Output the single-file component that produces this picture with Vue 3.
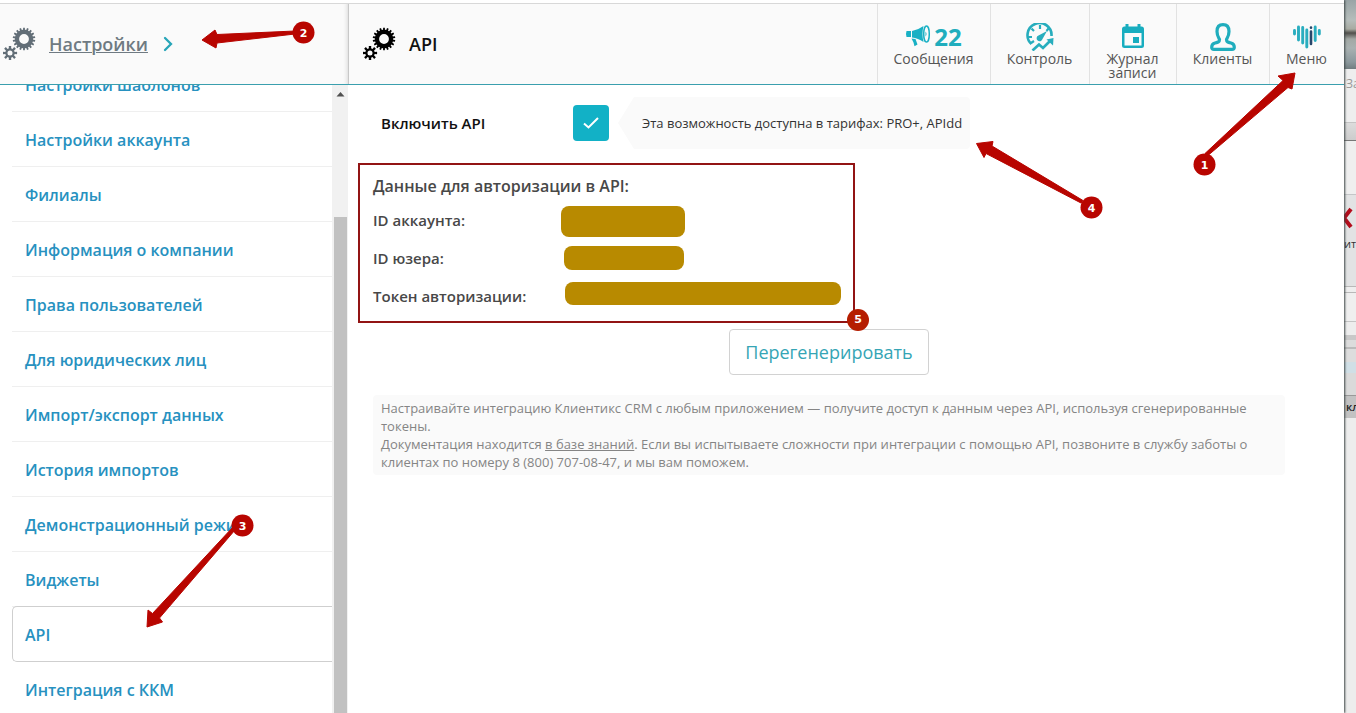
<script setup>
import { ref } from 'vue'

const enabled = ref(true)

const sections = [
  'Настройки шаблонов',
  'Настройки аккаунта',
  'Филиалы',
  'Информация о компании',
  'Права пользователей',
  'Для юридических лиц',
  'Импорт/экспорт данных',
  'История импортов',
  'Демонстрационный режим',
  'Виджеты',
  'API',
  'Интеграция с ККМ',
]

function gear(cx, cy, teeth, outer, inner, hole) {
  const pts = []
  const step = (Math.PI * 2) / teeth
  for (let i = 0; i < teeth; i++) {
    const a = i * step - Math.PI / 2
    for (const [k, r] of [[-0.3, inner], [-0.22, outer], [0.22, outer], [0.3, inner]]) {
      pts.push(`${(cx + r * Math.cos(a + k * step)).toFixed(2)} ${(cy + r * Math.sin(a + k * step)).toFixed(2)}`)
    }
  }
  return `M${pts.join('L')}ZM${cx - hole} ${cy}a${hole} ${hole} 0 1 0 ${hole * 2} 0a${hole} ${hole} 0 1 0 ${-hole * 2} 0Z`
}
const gears = gear(21, 12, 18, 11.3, 9.2, 4.9) + gear(7, 26, 8, 7.2, 4.8, 2.5)

const arrows = [
  'M1295 73L1278 76L1283 80.500L1205 153.500L1208.500 155L1288 87.500L1292 89Z',
  'M202 40L215 30L217 34.500L295 31L295 34L217 43L216 48Z',
  'M147 627L148 610L152.500 613.500L233 527L235 530L159.500 618L162.500 622Z',
  'M976.500 143.500L993 141.500L992 146L1083 200.500L1081 203L986 153.500L984 157.500Z',
]
const pins = [
  { n: 1, x: 1204.5, y: 164.5 },
  { n: 2, x: 303.5, y: 32.5 },
  { n: 3, x: 242.5, y: 525.5 },
  { n: 4, x: 1091.5, y: 207.5 },
]
</script>

<template>
  <div class="screen">
    <div class="window">
      <header class="topbar">
        <div class="crumb">
          <svg class="gears" width="34" height="34" viewBox="0 0 34 34"><path :d="gears" fill="#626e77" fill-rule="evenodd" /></svg>
          <a class="crumb-link" href="#settings">Настройки</a>
          <svg width="10" height="16" viewBox="0 0 10 16"><path d="M2 2L8 8L2 14" fill="none" stroke="#27a5b8" stroke-width="2.300" stroke-linecap="round" /></svg>
        </div>
        <div class="heading">
          <svg class="gears" width="34" height="34" viewBox="0 0 34 34"><path :d="gears" fill="#000" fill-rule="evenodd" /></svg>
          <h1>API</h1>
        </div>
        <nav class="tools">
          <a href="#messages" class="tool messages">
            <span class="tool-icon">
              <svg width="26" height="24" viewBox="0 0 26 24">
                <path d="M1.500 6Q0.500 9 1.500 12H6V6ZM7 6Q13 5 18.500 1Q16.500 9 18.500 17Q13 13 7 12.500ZM6.500 13.500L10.500 14L12.500 19.500L9.500 21.200L8.500 17.500Z" fill="#18b0c4" />
                <ellipse cx="21.500" cy="9" rx="2.800" ry="8" fill="none" stroke="#18b0c4" stroke-width="1.500" />
                <path d="M20.500 6.500Q22.500 9 20.500 11.500Z" fill="#18b0c4" />
              </svg>
              <b>22</b>
            </span>
            <span>Сообщения</span>
          </a>
          <a href="#control" class="tool control">
            <span class="tool-icon">
              <svg width="28" height="28" viewBox="0 0 28 28" fill="none" stroke="#27adbd">
                <path d="M5.500 21A12 12 0 1 1 25.500 13" stroke-width="2.600" />
                <path d="M14 2V6M5.500 5.500L8 8M22.500 5.500L20.500 8M2 14H6M5 20L8 18" stroke-width="2.200" />
                <path d="M21 8L16.500 16A3 3 0 1 1 12.500 12.500Z" fill="#27adbd" stroke="none" />
                <path d="M6.500 27.500L13 21.500L17 25L24 18" stroke-width="2.700" />
                <path d="M20.500 16.500L27.500 15L27 22.500Z" fill="#27adbd" stroke="none" />
              </svg>
            </span>
            <span>Контроль</span>
          </a>
          <a href="#journal" class="tool journal">
            <span class="tool-icon">
              <svg width="22" height="26" viewBox="0 0 22 26">
                <path d="M3.500 0H6.500V2.500H15.500V0H18.500V2.500H19.500Q22 2.500 22 5V21.500Q22 24 19.500 24H2.500Q0 24 0 21.500V5Q0 2.500 2.500 2.500H3.500ZM2.500 9V21.500H19.500V9Z" fill="#18adbf" fill-rule="evenodd" />
                <rect x="11" y="13" width="6" height="6" fill="#18adbf" />
              </svg>
            </span>
            <span>Журнал<br>записи</span>
          </a>
          <a href="#clients" class="tool clients">
            <span class="tool-icon">
              <svg width="26" height="28" viewBox="0 0 26 28" fill="none" stroke="#20adbd" stroke-width="3.200">
                <path d="M13 1.700C9 1.700 7 4.500 7 8.500C7 12.500 8.500 14.500 9.500 16.500C9.500 19 8 19.300 5 20C2.500 20.700 1.700 22.500 1.700 24.200Q1.700 26.300 4 26.300H22Q24.300 26.300 24.300 24.200C24.300 22.500 23.500 20.700 21 20C18 19.300 16.500 19 16.500 16.500C17.500 14.500 19 12.500 19 8.500C19 4.500 17 1.700 13 1.700Z" />
              </svg>
            </span>
            <span>Клиенты</span>
          </a>
          <a href="#menu" class="tool menu">
            <span class="tool-icon">
              <svg width="30" height="26" viewBox="0 0 30 26" fill="none" stroke="#29adbf" stroke-width="2.900" stroke-linecap="round">
                <path d="M2.500 6.500V10M6.500 3V16M10.700 3.500V19M14.800 6V23M23.200 3V16.500M27.300 6.500V10" />
                <path d="M19 7.500V20M19 3.500V3.700" stroke="#27466a" stroke-width="2.600" />
              </svg>
            </span>
            <span>Меню</span>
          </a>
        </nav>
      </header>

      <div class="body">
        <aside class="sidebar">
          <ul class="sections">
            <li v-for="s in sections" :key="s" :class="{ active: s === 'API' }"><a href="#section">{{ s }}</a></li>
          </ul>
          <div class="scrollbar">
            <svg width="16" height="16" viewBox="0 0 16 16"><path d="M4.500 11.500L8.500 7L12.500 11.500Z" fill="#505050" /></svg>
            <div class="thumb"></div>
          </div>
        </aside>

        <main class="content">
          <div class="toggle-row">
            <label for="api-on">Включить API</label>
            <span class="check">
              <input id="api-on" v-model="enabled" type="checkbox">
              <svg v-if="enabled" width="18" height="14" viewBox="0 0 18 14"><path d="M2 7.500L6.500 11.500L16 2" fill="none" stroke="#fff" stroke-width="2" /></svg>
            </span>
            <p class="hint">Эта возможность доступна в тарифах: PRO+, APIdd</p>
          </div>

          <section class="credentials">
            <h2>Данные для авторизации в API:</h2>
            <dl>
              <dt>ID аккаунта:</dt><dd><span class="redacted account"></span></dd>
              <dt>ID юзера:</dt><dd><span class="redacted user"></span></dd>
              <dt>Токен авторизации:</dt><dd><span class="redacted token"></span></dd>
            </dl>
            <span class="corner-pin">5</span>
          </section>

          <div class="actions"><button type="button">Перегенерировать</button></div>

          <p class="note">
            Настраивайте интеграцию Клиентикс CRM с любым приложением — получите доступ к данным через API, используя сгенерированные токены.<br>
            Документация находится <a href="#kb">в базе знаний</a>. Если вы испытываете сложности при интеграции с помощью API, позвоните в службу заботы о клиентах по номеру 8 (800) 707-08-47, и мы вам поможем.
          </p>
        </main>
      </div>
    </div>

    <div class="behind">
      <div class="photo"></div>
      <div class="tab">За</div>
      <div class="band"></div>
      <div class="pane"></div>
      <div class="delete">
        <svg width="12" height="26" viewBox="0 0 12 26"><path d="M7 4L-7 22M7 22L-7 4" fill="none" stroke="#b30d1c" stroke-width="4" /></svg>
        <span>ить</span>
      </div>
      <div class="gap"></div>
      <div class="field"></div>
      <div class="spacer"></div>
      <div class="thumbnail"></div>
      <div class="caption">кл</div>
      <div class="rest"></div>
    </div>

    <svg class="overlay" width="1356" height="713" viewBox="0 0 1356 713">
      <path v-for="a in arrows" :key="a" :d="a" fill="#b80500" stroke="#b80500" stroke-width="1" stroke-linejoin="round" />
      <g v-for="p in pins" :key="p.n">
        <circle :cx="p.x" :cy="p.y" r="11" fill="#b80500" />
        <text :x="p.x" :y="p.y + 4" text-anchor="middle">{{ p.n }}</text>
      </g>
    </svg>
  </div>
</template>

<style>
body { margin: 0; }
</style>

<style scoped>
* { box-sizing: border-box; }
.screen {
  position: relative;
  display: flex;
  height: 100vh;
  overflow: hidden;
  background: #fff;
  font-family: "Open Sans", "Noto Sans", sans-serif;
}
a { color: inherit; text-decoration: none; }
.window {
  flex: 1;
  min-width: 0;
  display: flex;
  flex-direction: column;
  padding-top: 3px;
  background: #fff;
  z-index: 1;
  box-shadow: 1px 0 2px #3c4646;
}
.topbar {
  display: flex;
  height: 82px;
  flex: none;
  background: #fafafa;
  border-top: 1px solid #d8d8d8;
  border-bottom: 1px solid #3a9fae;
}
.crumb {
  width: 349px;
  display: flex;
  align-items: center;
  padding-left: 3px;
  border-right: 1px solid #c8c8c8;
  box-shadow: inset -5px 0 5px -5px #ccc;
}
.crumb-link {
  margin: 0 15px 0 12px;
  font-size: 18px;
  font-weight: 600;
  color: #6f7a82;
  text-decoration: underline;
  text-decoration-thickness: 1px;
}
.heading { flex: 1; display: flex; align-items: center; padding-left: 14px; }
h1 { margin: 0 0 0 12px; font-size: 18px; font-weight: 600; color: #111; }
.tools { display: flex; }
.tool {
  display: flex;
  flex-direction: column;
  align-items: center;
  padding: 18px 1px 0 0;
  border-left: 1px solid #e2e2e2;
  font-size: 14px;
  line-height: 14px;
  text-align: center;
  color: #555;
  font-weight: 400;
}
.tool-icon { display: flex; align-items: center; justify-content: center; height: 30px; flex: none; }
.tool-icon b { margin: 0 0 0 3px; font-size: 24px; font-weight: 700; color: #20adbd; }
.messages { width: 113px; }
.control { width: 99px; }
.journal { width: 87px; }
.clients { width: 93px; }
.menu { width: 75px; }

.body { flex: 1; min-height: 0; display: flex; }
.sidebar { width: 349px; display: flex; overflow: hidden; padding-right: 1px; }
.sections {
  flex: 1;
  margin: -28px 0 0;
  padding: 0 0 0 12px;
  list-style: none;
}
.sections li {
  display: flex;
  align-items: center;
  height: 55px;
  padding: 2px 0 0 13px;
  border-bottom: 1px solid #efefef;
  font-size: 16px;
  font-weight: 600;
  color: #2791c0;
}
.sections li.active {
  height: 56px;
  margin-top: -1px;
  padding-left: 12px;
  border: 1px solid #cfcfcf;
  border-right: 0;
  border-radius: 5px 0 0 5px;
}
.scrollbar { width: 16px; background: #f1f1f1; display: flex; flex-direction: column; padding-right: 1px; }
.thumb { flex: 1; margin: 116px 0 0 2px; background: #c1c1c1; }

.content { flex: 1; min-width: 0; padding: 12px 59px 0 24px; }
.toggle-row { display: flex; align-items: center; padding-left: 8px; height: 52px; }
.toggle-row label { width: 192px; font-size: 15px; font-weight: 600; color: #111; }
.check { display: grid; width: 36px; height: 36px; place-items: center; }
.check input {
  grid-area: 1 / 1;
  appearance: none;
  width: 36px;
  height: 36px;
  margin: 0;
  border-radius: 4px;
  background: #12b1c6;
}
.check svg { grid-area: 1 / 1; pointer-events: none; }
.hint {
  margin: 0 0 0 9px;
  padding: 0 8px 0 24px;
  font-size: 13px;
  line-height: 52px;
  color: #333;
  background: #fafafa;
  border-radius: 4px;
  clip-path: polygon(0 50%, 16px 0, 100% 0, 100% 100%, 16px 100%);
}
.credentials {
  position: relative;
  width: 497px;
  height: 160px;
  margin: 14px 0 0 -15px;
  padding: 8px 13px;
  border: 2px solid #921414;
  color: #484848;
}
h2 { margin: 0 0 2px; font-size: 16px; line-height: 26px; font-weight: 600; }
dl { display: grid; grid-template-columns: 188px 1fr; grid-auto-rows: 38px; margin: 0; font-size: 15px; font-weight: 600; }
dt { line-height: 38px; }
dd { margin: 0; display: flex; align-items: flex-start; padding-top: 5px; }
.redacted { background: #b88a00; border-radius: 8px; }
.account { width: 124px; height: 31px; }
.user { width: 120px; height: 24px; margin: 2px 0 0 3px; }
.token { width: 276px; height: 23px; margin-left: 4px; }
.corner-pin {
  position: absolute;
  right: -16px;
  bottom: -10px;
  width: 22px;
  height: 22px;
  border-radius: 50%;
  background: #b51d00;
  color: #fff;
  font: bold 11px/22px "DejaVu Sans", sans-serif;
  text-align: center;
}
.actions { display: flex; justify-content: center; margin-top: 6px; }
.actions button {
  height: 46px;
  padding: 0 15px;
  border: 1px solid #d2d2d2;
  border-radius: 4px;
  background: #fff;
  font-family: inherit;
  font-size: 18px;
  font-weight: 400;
  color: #35a5b5;
}
.note {
  margin: 20px 0 0;
  padding: 4px 8px;
  background: #fafafa;
  border-radius: 4px;
  font-size: 13px;
  line-height: 18px;
  color: #858585;
}
.note a { text-decoration: underline; }

.behind {
  width: 12px;
  flex: none;
  display: flex;
  flex-direction: column;
  overflow: hidden;
  background: #ededed;
  white-space: nowrap;
  font-size: 12px;
}
.photo { height: 69px; background: linear-gradient(#99a4a6, #b5bdbb 20px, #a8aba2 29px, #51504c 33px, #a2a8a4 39px, #a9b1b1 48px, #8b989c 62px, #727d80); }
.tab { height: 54px; padding: 6px 0 0 2px; background: #eee; border-bottom: 1px solid #c4c4c4; color: #999; }
.band { height: 18px; background: linear-gradient(#dcdcdc, #ccc); border-bottom: 1px solid #777; }
.pane { height: 54px; background: #efefef; border-bottom: 1px solid #c4c6c8; }
.delete { height: 92px; padding-top: 10px; background: #e2e3e4; border-bottom: 1px solid #b8b8b8; color: #333; font-size: 11px; }
.delete svg { display: block; }
.delete span { display: block; line-height: 26px; }
.gap { height: 6px; background: #eee; border-bottom: 1px solid #b8b8b8; }
.field { height: 29px; background: #efefef; border-bottom: 1px solid #c4c4c4; }
.spacer { height: 13px; }
.thumbnail { height: 61px; background: linear-gradient(#c8c8c8 5px, #dcdcdc 5px 12px, #bbb 12px 14px, #ddd 14px 27px, #d0dfe6 27px 38px, #dadada 38px); border-bottom: 1px solid #999; }
.caption { height: 22px; padding-left: 2px; background: #c2c2c2; font-weight: 600; line-height: 22px; color: #222; font-size: 11px; }
.rest { flex: 1; }

.overlay { position: absolute; left: 0; top: 0; z-index: 2; pointer-events: none; }
.overlay text { font: bold 11px "DejaVu Sans", sans-serif; fill: #fff; }
</style>
